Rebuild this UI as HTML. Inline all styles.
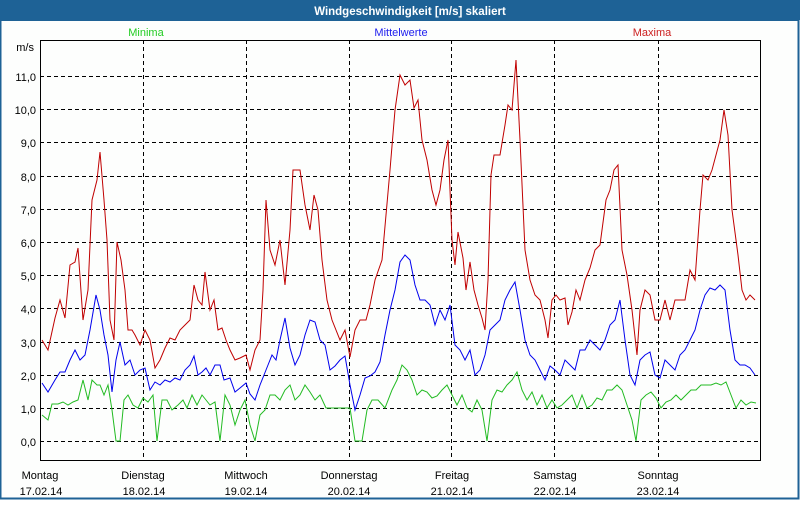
<!DOCTYPE html>
<html><head><meta charset="utf-8"><style>
body{margin:0;width:800px;height:500px;overflow:hidden;background:#fff;font-family:"Liberation Sans",sans-serif}
</style></head><body>
<svg width="800" height="500" xmlns="http://www.w3.org/2000/svg" font-family="Liberation Sans, sans-serif" font-size="11">
<rect x="0" y="0" width="800" height="500" fill="#fdfefd"/>
<rect x="0" y="0" width="800" height="20" fill="#1e6296"/>
<rect x="0.5" y="20" width="798" height="478.5" fill="none" stroke="#1e6296" stroke-width="2"/>
<text x="410" y="15" text-anchor="middle" fill="#fff" font-weight="bold" font-size="11.5">Windgeschwindigkeit [m/s] skaliert</text>
<text x="146" y="36" text-anchor="middle" fill="#22cc22">Minima</text>
<text x="401" y="36" text-anchor="middle" fill="#2020ee">Mittelwerte</text>
<text x="652" y="36" text-anchor="middle" fill="#cc2020">Maxima</text>
<text x="34" y="51" text-anchor="end" fill="#000">m/s</text>
<g stroke="#000" stroke-width="1" stroke-dasharray="4,3" fill="none">
<path d="M143.5 40V460M246.5 40V460M349.5 40V460M451.5 40V460M554.5 40V460M658.5 40V460"/>
<path d="M40 441.5H760M40 408.5H760M40 375.5H760M40 342.5H760M40 308.5H760M40 275.5H760M40 242.5H760M40 209.5H760M40 176.5H760M40 142.5H760M40 109.5H760M40 76.5H760"/>
</g>
<rect x="40.5" y="40.5" width="720" height="420" fill="none" stroke="#000"/>
<g fill="#000" text-anchor="end">
<text x="36" y="446">0,0</text><text x="36" y="413">1,0</text><text x="36" y="380">2,0</text><text x="36" y="347">3,0</text><text x="36" y="313">4,0</text><text x="36" y="280">5,0</text><text x="36" y="247">6,0</text><text x="36" y="214">7,0</text><text x="36" y="181">8,0</text><text x="36" y="147">9,0</text><text x="36" y="114">10,0</text><text x="36" y="81">11,0</text>
</g>
<g fill="#000" text-anchor="middle">
<text x="40" y="479">Montag</text><text x="41" y="495">17.02.14</text>
<text x="143" y="479">Dienstag</text><text x="144" y="495">18.02.14</text>
<text x="246" y="479">Mittwoch</text><text x="246" y="495">19.02.14</text>
<text x="349" y="479">Donnerstag</text><text x="349" y="495">20.02.14</text>
<text x="452" y="479">Freitag</text><text x="452" y="495">21.02.14</text>
<text x="555" y="479">Samstag</text><text x="555" y="495">22.02.14</text>
<text x="658" y="479">Sonntag</text><text x="658" y="495">23.02.14</text>
</g>
<polyline fill="none" stroke="#c00000" stroke-width="1" points="42,340 48,350 55,318 60,300 65,318 70,265 75,262 78,248 83,320 88,290 92,200 97,180 100,152 104,200 107,240 110,320 114,340 117,242 121,260 125,290 128,330 132,330 135,335 140,345 145,330 150,340 155,368 160,360 165,348 170,338 175,340 180,330 185,325 190,320 194,285 198,300 202,305 205,272 210,310 214,300 218,330 222,328 226,340 230,350 235,360 240,358 246,355 250,370 255,350 260,340 263,290 266,200 270,250 275,265 280,240 285,285 290,230 293,170 300,170 305,205 310,230 314,195 318,210 322,260 327,300 332,320 340,340 345,330 350,357 355,330 360,320 366,320 370,305 375,280 382,260 390,170 395,110 400,75 405,85 410,80 414,108 418,100 422,140 427,160 432,190 436,205 440,190 444,160 448,140 452,240 455,265 458,232 463,258 466,290 470,262 474,290 478,305 482,318 485,330 488,280 491,175 494,155 500,155 505,125 508,105 512,110 516,60 520,140 525,250 530,280 535,295 540,300 545,320 548,338 552,300 556,295 560,300 565,298 568,325 572,312 576,290 580,300 585,280 590,268 595,250 600,245 606,200 610,190 614,170 618,165 622,250 627,275 632,310 637,355 640,310 645,290 650,295 655,320 660,320 665,300 670,320 675,300 680,300 685,300 690,270 695,280 700,210 703,175 708,180 712,170 716,155 720,140 724,110 728,135 732,210 738,255 742,290 746,300 750,295 755,300"/>
<polyline fill="none" stroke="#0000ee" stroke-width="1" points="42,383 48,392 55,380 60,372 65,372 70,360 75,350 80,360 85,355 90,330 96,295 100,310 104,335 108,355 112,392 116,360 120,342 125,365 130,360 135,375 140,370 145,368 150,390 155,382 160,385 165,380 170,382 175,378 180,380 185,370 190,365 194,356 198,375 202,372 206,368 210,375 215,365 220,365 224,380 230,378 235,392 240,388 246,383 250,394 255,400 260,385 264,375 268,365 272,355 276,360 280,340 285,318 290,348 295,365 300,355 305,335 310,320 315,322 320,340 325,345 330,370 335,366 340,360 345,356 350,385 355,410 360,395 365,378 370,376 375,372 380,362 385,335 390,310 395,290 400,262 405,255 410,260 415,285 420,300 425,300 430,305 435,325 440,310 445,320 450,305 455,345 460,350 465,360 470,350 475,375 480,370 485,355 490,330 495,325 500,320 505,300 510,290 515,282 520,310 525,340 530,355 535,360 540,370 545,380 550,366 555,370 560,375 565,360 570,365 575,370 580,350 585,350 590,340 595,345 600,350 605,340 610,325 615,320 620,300 625,340 630,375 635,385 640,360 645,355 650,352 655,375 660,378 665,360 670,365 675,370 680,355 685,350 690,340 695,330 700,310 705,295 710,288 715,290 720,285 725,290 730,330 735,360 740,365 745,365 750,368 755,375"/>
<polyline fill="none" stroke="#22bb22" stroke-width="1" points="42,415 48,420 52,404 58,404 63,402 68,405 73,402 78,400 83,380 88,400 92,380 97,385 100,385 104,395 108,385 112,410 116,441 120,441 124,400 128,395 133,405 138,408 143,398 148,402 153,395 157,441 162,400 167,400 172,410 178,405 183,400 187,408 192,395 197,405 202,395 206,400 210,405 215,402 220,441 225,395 230,405 235,425 240,410 245,400 250,425 255,441 260,415 265,410 270,395 275,395 280,400 285,390 290,385 295,400 300,395 305,385 310,392 315,400 320,395 326,408 330,408 340,408 350,408 355,441 362,441 367,410 372,400 378,400 385,408 392,390 397,380 402,365 407,370 412,380 417,395 422,390 427,392 432,398 437,396 442,390 447,385 452,395 457,405 462,395 467,408 472,412 477,400 482,410 487,441 492,400 497,390 502,392 507,385 512,380 517,372 522,390 527,400 532,392 537,405 542,395 547,408 552,400 557,408 562,405 567,400 572,395 577,408 582,395 587,408 592,405 597,398 602,400 607,390 612,390 617,385 622,390 627,405 632,420 636,441 641,400 646,395 651,392 656,398 661,408 666,402 671,400 676,395 681,400 686,395 691,390 696,390 701,385 706,385 711,385 716,383 721,385 726,382 731,395 736,408 741,400 746,405 751,402 756,403"/>
</svg>
</body></html>
